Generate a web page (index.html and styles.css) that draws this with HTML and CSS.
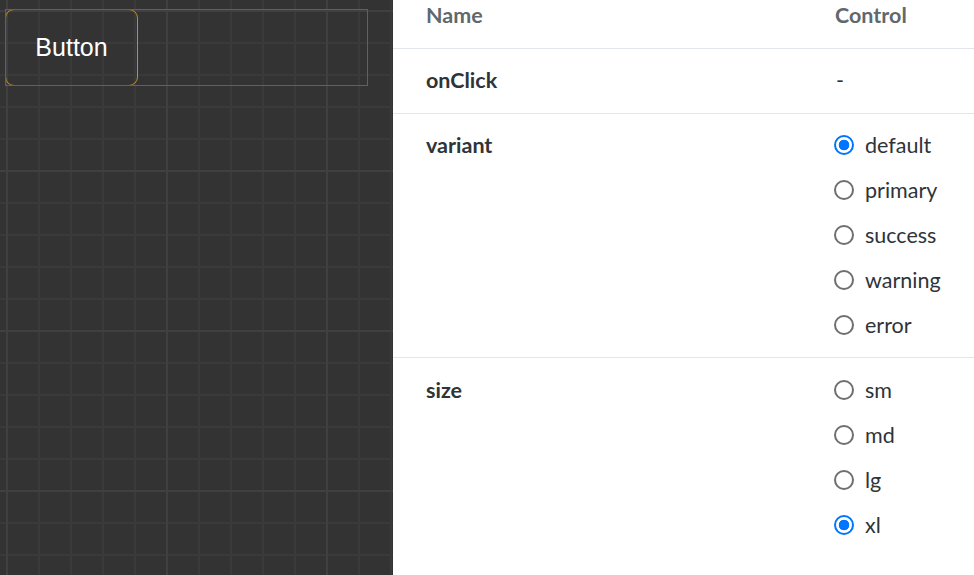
FILE: index.html
```html
<!DOCTYPE html>
<html lang="en">
<head>
<meta charset="utf-8">
<title>Button</title>
<link rel="stylesheet" href="styles.css">
</head>
<body>
<div class="app">
  <section class="canvas">
    <div class="selection">
      <button class="btn" type="button">Button</button>
    </div>
  </section>
  <section class="panel">
    <div class="row head">
      <div class="name">Name</div>
      <div class="control">Control</div>
    </div>
    <div class="row simple">
      <div class="name">onClick</div>
      <div class="control"><span class="dash">-</span></div>
    </div>
    <div class="row">
      <div class="name">variant</div>
      <div class="control options">
        <label class="opt"><input type="radio" name="variant" checked><span>default</span></label>
        <label class="opt"><input type="radio" name="variant"><span>primary</span></label>
        <label class="opt"><input type="radio" name="variant"><span>success</span></label>
        <label class="opt"><input type="radio" name="variant"><span>warning</span></label>
        <label class="opt"><input type="radio" name="variant"><span>error</span></label>
      </div>
    </div>
    <div class="row last">
      <div class="name">size</div>
      <div class="control options">
        <label class="opt"><input type="radio" name="size"><span>sm</span></label>
        <label class="opt"><input type="radio" name="size"><span>md</span></label>
        <label class="opt"><input type="radio" name="size"><span>lg</span></label>
        <label class="opt"><input type="radio" name="size" checked><span>xl</span></label>
      </div>
    </div>
  </section>
</div>
</body>
</html>
```

FILE: styles.css
```css
html, body {
  margin: 0;
  padding: 0;
  height: 100%;
  overflow: hidden;
}
body {
  font-family: Lato, "Noto Sans", sans-serif;
  background: #ffffff;
}
.app {
  display: flex;
  height: 575px;
}
.canvas {
  width: 393px;
  flex: none;
  box-sizing: border-box;
  padding: 9px 0 0 5px;
  background-color: #333333;
  background-image:
    linear-gradient(to right, #404040 2px, transparent 2px),
    linear-gradient(to bottom, #404040 2px, transparent 2px),
    linear-gradient(to right, #3a3a3a 2px, transparent 2px),
    linear-gradient(to bottom, #3a3a3a 2px, transparent 2px);
  background-size: 160px 160px, 160px 160px, 32px 32px, 32px 32px;
  background-position: 6px 10px, 6px 10px, 6px 10px, 6px 10px;
}
.selection {
  display: flex;
  width: 363px;
  height: 77px;
  outline: 1px solid #1f6fc9;
  outline-offset: -1px;
}
.btn {
  width: 133px;
  height: 77px;
  box-sizing: border-box;
  border: 1px solid #d18a1d;
  border-radius: 9px;
  background: transparent;
  color: #ffffff;
  font-family: "Liberation Sans", Arial, sans-serif;
  font-size: 25px;
  padding: 0 0 1px 0;
}
.panel {
  flex: 1;
  background: #ffffff;
  color: #2e3438;
}
.row {
  display: flex;
  border-bottom: 1px solid #e3e7eb;
  padding: 16px 0 17px;
}
.row.head {
  padding: 0 0 18px;
  color: #5f686e;
}
.row.simple {
  padding: 16px 0 18px;
}
.row.last {
  border-bottom: none;
  padding-top: 17px;
}
.name {
  width: 442px;
  flex: none;
  padding-left: 33px;
  box-sizing: border-box;
  font-size: 21.5px;
  font-weight: 700;
  line-height: 30px;
}
.control {
  flex: 1;
  font-size: 21.5px;
  line-height: 30px;
}
.head .control {
  font-weight: 700;
}
.dash {
  padding-left: 1px;
}
.options {
  display: flex;
  flex-direction: column;
  gap: 15px;
}
.opt {
  display: flex;
  align-items: center;
  gap: 11px;
  height: 30px;
}
.opt input {
  appearance: none;
  -webkit-appearance: none;
  flex: none;
  width: 20px;
  height: 20px;
  margin: 0 0 0 -1px;
  box-sizing: border-box;
  border: 2px solid #6f6f6f;
  border-radius: 50%;
  background: #ffffff;
}
.opt input:checked {
  border-color: #0075ff;
  background: radial-gradient(circle, #0075ff 0 5px, #ffffff 5.6px);
}
```
